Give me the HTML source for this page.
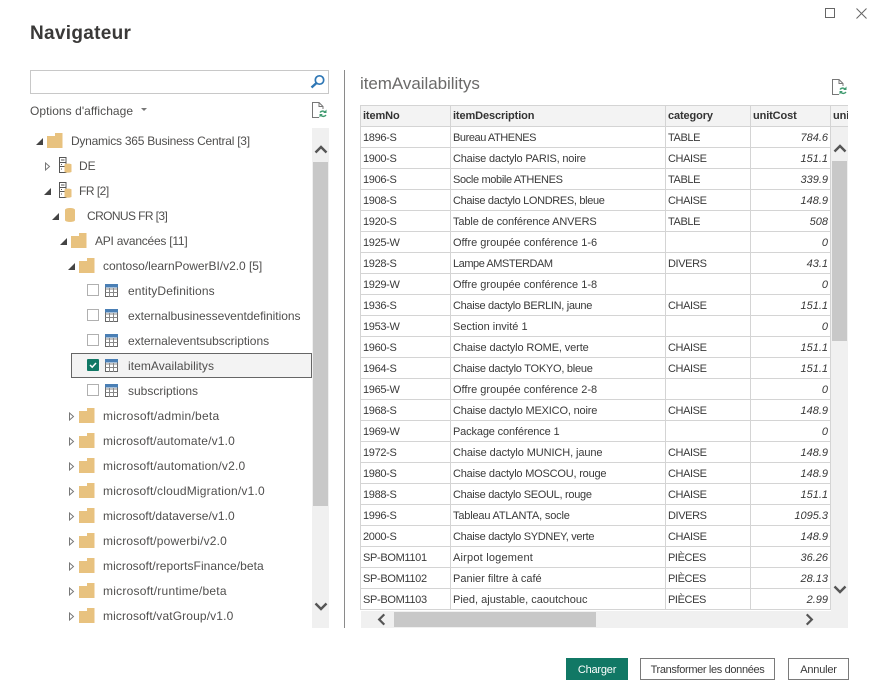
<!DOCTYPE html>
<html lang="fr"><head><meta charset="utf-8"><title>Navigateur</title>
<style>
html,body{margin:0;padding:0;background:#fff}
body{width:874px;height:697px;overflow:hidden;position:relative;font-family:"Liberation Sans",sans-serif;color:#3b3a39;font-size:12px}
.a{position:absolute}
.r{position:absolute;height:25px;line-height:25px;white-space:nowrap;font-size:12px;color:#504f4e}
svg{position:absolute;display:block}
table{border-collapse:collapse;table-layout:fixed;font-size:11px;color:#3a3a3a}
td,th{border:1px solid #d4d4d4;height:20px;padding:0 2px;overflow:hidden;white-space:nowrap;text-align:left;line-height:20px}
td{padding-top:2px;height:18px;line-height:18px}
td:nth-child(1){letter-spacing:-.33px}
td:nth-child(3){letter-spacing:-.4px}
th{background:#f3f3f3;font-weight:bold;color:#333;letter-spacing:-.12px}
td.n{text-align:right;font-style:italic;letter-spacing:0}
.b{position:absolute;top:658px;height:20px;line-height:22px;border:1px solid #7a7a7a;text-align:center;font-size:11px;color:#3a3a3a;background:#fff}
.cb{position:absolute;left:87px;width:10px;height:10px;border:1px solid #b0b0b0;background:#fff}
</style></head><body>
<svg width="0" height="0" style="display:none">
<symbol id="f" viewBox="0 0 16 15"><path d="M0 3h8V0h7.500v15H0z" fill="#e8c27f"/></symbol>
<symbol id="s" viewBox="0 0 13 16"><path d="M.5.5h6.500v15H.5zM.5 5.500h6.500M.5 9.500h6.500" fill="#fff" stroke="#555"/><path d="M2 3h3.500M2 7.500h1M2 12h1" stroke="#555"/><path d="M5.500 7.500c0-1.200 7-1.200 7 0v7.300c0 1.200-7 1.200-7 0z" fill="#e8c27f"/></symbol>
<symbol id="d" viewBox="0 0 10 14"><path d="M0 2c0-2.600 10-2.600 10 0v10c0 2.600-10 2.600-10 0z" fill="#e8c27f"/></symbol>
<symbol id="t" viewBox="0 0 13 13"><rect x=".5" y=".5" width="12" height="12" fill="#fff" stroke="#666"/><path d="M.5 5h12M.5 8.500h12M4.500 4v9M8.500 4v9" stroke="#888"/><rect width="13" height="3.500" fill="#4a7fb5"/></symbol>
<symbol id="o" viewBox="0 0 7 9"><path d="M1.500 1v7l4-3.500z" fill="#fff" stroke="#777"/></symbol>
<symbol id="c" viewBox="0 0 7 7"><path d="M7 0v7H0z" fill="#444"/></symbol>
<symbol id="e" viewBox="0 0 15 16"><path d="M7 15.500H.5V.5h6.500l4 4v2.500M7 .5v4h4" fill="none" stroke="#777"/><path d="M8 10.500c1.200-1.700 3.500-1.800 4.800-.5M14 13c-1.200 1.700-3.500 1.800-4.800.5" fill="none" stroke="#3f9a6f" stroke-width="1.400"/><path d="M14.500 7.500v3.500H11.200zM7.500 15.500V12h3.300z" fill="#3f9a6f"/></symbol>
<symbol id="u" viewBox="0 0 14 9"><path d="M1.500 7.500L7 2l5.500 5.500" fill="none" stroke="#555" stroke-width="2.400"/></symbol>
<symbol id="w" viewBox="0 0 14 9"><path d="M1.500 1.500L7 7l5.500-5.500" fill="none" stroke="#555" stroke-width="2.400"/></symbol>
<symbol id="l" viewBox="0 0 9 14"><path d="M7.500 1.500L2 7l5.500 5.500" fill="none" stroke="#555" stroke-width="2.400"/></symbol>
<symbol id="g" viewBox="0 0 9 14"><path d="M1.500 1.500L7 7l-5.500 5.500" fill="none" stroke="#555" stroke-width="2.400"/></symbol>
</svg>

<!-- window controls -->
<div class="a" style="left:825px;top:8px;width:8px;height:8px;border:1px solid #666"></div>
<svg style="left:856px;top:8px" width="11" height="11"><path d="M.5.500l10 10M10.500.500l-10 10" stroke="#666" fill="none"/></svg>

<div class="a" style="left:30px;top:22px;font-size:19px;font-weight:bold;color:#3a3938;line-height:24px;letter-spacing:.3px">Navigateur</div>

<!-- search -->
<div class="a" style="left:30px;top:70px;width:297px;height:22px;border:1px solid #c8c8c8"></div>
<svg style="left:310px;top:74px" width="16" height="15"><circle cx="9.500" cy="6" r="4.200" fill="none" stroke="#2f77b5" stroke-width="1.700"/><path d="M6.500 9L1.500 13.500" stroke="#2f77b5" stroke-width="2.400"/></svg>

<div class="a" style="left:30px;top:103px;line-height:16px;color:#504f4e;letter-spacing:.05px">Options d'affichage</div>
<svg style="left:141px;top:108px" width="7" height="4"><path d="M0 0h6L3 3z" fill="#777"/></svg>
<svg style="left:312px;top:102px" width="15" height="16"><use href="#e"/></svg>

<!-- tree -->
<svg style="left:36px;top:138px" width="7" height="7"><use href="#c"/></svg>
<svg style="left:47px;top:133px" width="16" height="15"><use href="#f"/></svg>
<div class="r" style="left:71px;top:129px;letter-spacing:-.24px">Dynamics 365 Business Central [3]</div>

<svg style="left:44px;top:162px" width="7" height="9"><use href="#o"/></svg>
<svg style="left:59px;top:157px" width="13" height="16"><use href="#s"/></svg>
<div class="r" style="left:79px;top:154px">DE</div>

<svg style="left:44px;top:188px" width="7" height="7"><use href="#c"/></svg>
<svg style="left:59px;top:182px" width="13" height="16"><use href="#s"/></svg>
<div class="r" style="left:79px;top:179px;letter-spacing:-.5px">FR [2]</div>

<svg style="left:52px;top:213px" width="7" height="7"><use href="#c"/></svg>
<svg style="left:65px;top:208px" width="10" height="14"><use href="#d"/></svg>
<div class="r" style="left:87px;top:204px;letter-spacing:-.6px">CRONUS FR [3]</div>

<svg style="left:60px;top:238px" width="7" height="7"><use href="#c"/></svg>
<svg style="left:71px;top:233px" width="16" height="15"><use href="#f"/></svg>
<div class="r" style="left:95px;top:229px;letter-spacing:-.24px">API avancées [11]</div>

<svg style="left:68px;top:263px" width="7" height="7"><use href="#c"/></svg>
<svg style="left:79px;top:258px" width="16" height="15"><use href="#f"/></svg>
<div class="r" style="left:103px;top:254px;letter-spacing:-.03px">contoso/learnPowerBI/v2.0 [5]</div>

<div class="a" style="left:71px;top:353px;width:239px;height:23px;border:1px solid #666;background:#f3f3f3"></div>

<div class="cb" style="top:284px"></div>
<svg style="left:105px;top:284px" width="13" height="13"><use href="#t"/></svg>
<div class="r" style="left:128px;top:279px;letter-spacing:.12px">entityDefinitions</div>
<div class="cb" style="top:309px"></div>
<svg style="left:105px;top:309px" width="13" height="13"><use href="#t"/></svg>
<div class="r" style="left:128px;top:304px;letter-spacing:-.03px">externalbusinesseventdefinitions</div>
<div class="cb" style="top:334px"></div>
<svg style="left:105px;top:334px" width="13" height="13"><use href="#t"/></svg>
<div class="r" style="left:128px;top:329px;letter-spacing:-.04px">externaleventsubscriptions</div>
<svg style="left:87px;top:359px" width="12" height="12"><rect width="12" height="12" rx="1" fill="#117865"/><path d="M3 6l2.200 2.200L9 4" fill="none" stroke="#fff" stroke-width="1.500"/></svg>
<svg style="left:105px;top:359px" width="13" height="13"><use href="#t"/></svg>
<div class="r" style="left:128px;top:354px;letter-spacing:.05px">itemAvailabilitys</div>
<div class="cb" style="top:384px"></div>
<svg style="left:105px;top:384px" width="13" height="13"><use href="#t"/></svg>
<div class="r" style="left:128px;top:379px">subscriptions</div>

<svg style="left:68px;top:412px" width="7" height="9"><use href="#o"/></svg>
<svg style="left:79px;top:408px" width="16" height="15"><use href="#f"/></svg>
<div class="r" style="left:103px;top:404px;letter-spacing:.25px">microsoft/admin/beta</div>
<svg style="left:68px;top:437px" width="7" height="9"><use href="#o"/></svg>
<svg style="left:79px;top:433px" width="16" height="15"><use href="#f"/></svg>
<div class="r" style="left:103px;top:429px;letter-spacing:.17px">microsoft/automate/v1.0</div>
<svg style="left:68px;top:462px" width="7" height="9"><use href="#o"/></svg>
<svg style="left:79px;top:458px" width="16" height="15"><use href="#f"/></svg>
<div class="r" style="left:103px;top:454px;letter-spacing:.2px">microsoft/automation/v2.0</div>
<svg style="left:68px;top:487px" width="7" height="9"><use href="#o"/></svg>
<svg style="left:79px;top:483px" width="16" height="15"><use href="#f"/></svg>
<div class="r" style="left:103px;top:479px;letter-spacing:.2px">microsoft/cloudMigration/v1.0</div>
<svg style="left:68px;top:512px" width="7" height="9"><use href="#o"/></svg>
<svg style="left:79px;top:508px" width="16" height="15"><use href="#f"/></svg>
<div class="r" style="left:103px;top:504px;letter-spacing:.04px">microsoft/dataverse/v1.0</div>
<svg style="left:68px;top:537px" width="7" height="9"><use href="#o"/></svg>
<svg style="left:79px;top:533px" width="16" height="15"><use href="#f"/></svg>
<div class="r" style="left:103px;top:529px;letter-spacing:.18px">microsoft/powerbi/v2.0</div>
<svg style="left:68px;top:562px" width="7" height="9"><use href="#o"/></svg>
<svg style="left:79px;top:558px" width="16" height="15"><use href="#f"/></svg>
<div class="r" style="left:103px;top:554px;letter-spacing:.07px">microsoft/reportsFinance/beta</div>
<svg style="left:68px;top:587px" width="7" height="9"><use href="#o"/></svg>
<svg style="left:79px;top:583px" width="16" height="15"><use href="#f"/></svg>
<div class="r" style="left:103px;top:579px;letter-spacing:.23px">microsoft/runtime/beta</div>
<svg style="left:68px;top:612px" width="7" height="9"><use href="#o"/></svg>
<svg style="left:79px;top:608px" width="16" height="15"><use href="#f"/></svg>
<div class="r" style="left:103px;top:604px;letter-spacing:.13px">microsoft/vatGroup/v1.0</div>

<!-- tree scrollbar -->
<div class="a" style="left:312px;top:128px;width:17px;height:500px;background:#f0f0f0"></div>
<div class="a" style="left:313px;top:162px;width:15px;height:344px;background:#c8c8c8"></div>
<svg style="left:314px;top:145px" width="14" height="9"><use href="#u"/></svg>
<svg style="left:314px;top:602px" width="14" height="9"><use href="#w"/></svg>

<div class="a" style="left:344px;top:70px;width:1px;height:558px;background:#8a8a8a"></div>

<div class="a" style="left:360px;top:72px;font-size:17px;line-height:24px;color:#6b6a69;letter-spacing:-.05px">itemAvailabilitys</div>
<svg style="left:832px;top:79px" width="15" height="16"><use href="#e"/></svg>

<!-- preview table -->
<div class="a" style="left:360px;top:105px;width:488px;height:505px;overflow:hidden">
<table style="width:500px">
<colgroup><col style="width:90px"><col style="width:215px"><col style="width:85px"><col style="width:80px"><col style="width:30px"></colgroup>
<tr><th>itemNo</th><th>itemDescription</th><th>category</th><th>unitCost</th><th>unitPrice</th></tr>
<tr><td>1896-S</td><td style="letter-spacing:-.43px">Bureau ATHENES</td><td>TABLE</td><td class="n">784.6</td><td></td></tr>
<tr><td>1900-S</td><td style="letter-spacing:-.19px">Chaise dactylo PARIS, noire</td><td>CHAISE</td><td class="n">151.1</td><td></td></tr>
<tr><td>1906-S</td><td style="letter-spacing:-.35px">Socle mobile ATHENES</td><td>TABLE</td><td class="n">339.9</td><td></td></tr>
<tr><td>1908-S</td><td style="letter-spacing:-.34px">Chaise dactylo LONDRES, bleue</td><td>CHAISE</td><td class="n">148.9</td><td></td></tr>
<tr><td>1920-S</td><td style="letter-spacing:-.12px">Table de conférence ANVERS</td><td>TABLE</td><td class="n">508</td><td></td></tr>
<tr><td>1925-W</td><td>Offre groupée conférence 1-6</td><td></td><td class="n">0</td><td></td></tr>
<tr><td>1928-S</td><td style="letter-spacing:-.45px">Lampe AMSTERDAM</td><td>DIVERS</td><td class="n">43.1</td><td></td></tr>
<tr><td>1929-W</td><td>Offre groupée conférence 1-8</td><td></td><td class="n">0</td><td></td></tr>
<tr><td>1936-S</td><td style="letter-spacing:-.32px">Chaise dactylo BERLIN, jaune</td><td>CHAISE</td><td class="n">151.1</td><td></td></tr>
<tr><td>1953-W</td><td>Section invité 1</td><td></td><td class="n">0</td><td></td></tr>
<tr><td>1960-S</td><td style="letter-spacing:-.12px">Chaise dactylo ROME, verte</td><td>CHAISE</td><td class="n">151.1</td><td></td></tr>
<tr><td>1964-S</td><td style="letter-spacing:-.25px">Chaise dactylo TOKYO, bleue</td><td>CHAISE</td><td class="n">151.1</td><td></td></tr>
<tr><td>1965-W</td><td>Offre groupée conférence 2-8</td><td></td><td class="n">0</td><td></td></tr>
<tr><td>1968-S</td><td style="letter-spacing:-.18px">Chaise dactylo MEXICO, noire</td><td>CHAISE</td><td class="n">148.9</td><td></td></tr>
<tr><td>1969-W</td><td style="letter-spacing:-.15px">Package conférence 1</td><td></td><td class="n">0</td><td></td></tr>
<tr><td>1972-S</td><td style="letter-spacing:-.1px">Chaise dactylo MUNICH, jaune</td><td>CHAISE</td><td class="n">148.9</td><td></td></tr>
<tr><td>1980-S</td><td style="letter-spacing:-.2px">Chaise dactylo MOSCOU, rouge</td><td>CHAISE</td><td class="n">148.9</td><td></td></tr>
<tr><td>1988-S</td><td style="letter-spacing:-.3px">Chaise dactylo SEOUL, rouge</td><td>CHAISE</td><td class="n">151.1</td><td></td></tr>
<tr><td>1996-S</td><td style="letter-spacing:-.18px">Tableau ATLANTA, socle</td><td>DIVERS</td><td class="n">1095.3</td><td></td></tr>
<tr><td>2000-S</td><td style="letter-spacing:-.3px">Chaise dactylo SYDNEY, verte</td><td>CHAISE</td><td class="n">148.9</td><td></td></tr>
<tr><td>SP-BOM1101</td><td style="letter-spacing:.2px">Airpot logement</td><td>PIÈCES</td><td class="n">36.26</td><td></td></tr>
<tr><td>SP-BOM1102</td><td>Panier filtre à café</td><td>PIÈCES</td><td class="n">28.13</td><td></td></tr>
<tr><td>SP-BOM1103</td><td>Pied, ajustable, caoutchouc</td><td>PIÈCES</td><td class="n">2.99</td><td></td></tr>
<tr><td>&nbsp;</td><td></td><td></td><td></td><td></td></tr>
</table>
</div>

<!-- table scrollbars -->
<div class="a" style="left:831px;top:127px;width:17px;height:501px;background:#f0f0f0"></div>
<div class="a" style="left:832px;top:161px;width:15px;height:180px;background:#c8c8c8"></div>
<svg style="left:833px;top:144px" width="14" height="9"><use href="#u"/></svg>
<svg style="left:833px;top:585px" width="14" height="9"><use href="#w"/></svg>
<div class="a" style="left:361px;top:611px;width:487px;height:17px;background:#f0f0f0"></div>
<div class="a" style="left:394px;top:612px;width:202px;height:15px;background:#c8c8c8"></div>
<svg style="left:377px;top:613px" width="9" height="13"><use href="#l"/></svg>
<svg style="left:805px;top:613px" width="9" height="13"><use href="#g"/></svg>

<!-- buttons -->
<div class="b" style="left:566px;width:60px;background:#117865;border-color:#117865;color:#fff;letter-spacing:-.2px">Charger</div>
<div class="b" style="left:640px;width:133px;letter-spacing:-.35px">Transformer les données</div>
<div class="b" style="left:788px;width:59px;letter-spacing:-.2px">Annuler</div>
</body></html>
